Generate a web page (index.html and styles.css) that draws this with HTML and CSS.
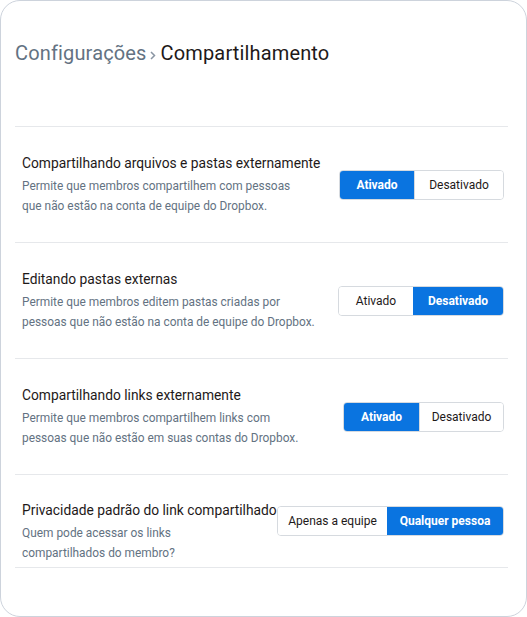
FILE: index.html
```html
<!DOCTYPE html>
<html lang="pt-BR">
<head>
<meta charset="utf-8">
<link rel="stylesheet" href="styles.css">
</head>
<body>
<div class="card">
  <header class="crumbs">
    <span class="crumb-parent">Configurações</span>
    <svg class="crumb-sep" width="6" height="9" viewBox="0 0 6 9" aria-hidden="true"><path d="M1 1 L4.5 4.5 L1 8" fill="none" stroke="#8a95a3" stroke-width="1.5"/></svg>
    <span class="crumb-current">Compartilhamento</span>
  </header>
  <section class="settings">
    <div class="row">
      <div class="info">
        <div class="title">Compartilhando arquivos e pastas externamente</div>
        <div class="desc">Permite que membros compartilhem com pessoas<br>que não estão na conta de equipe do Dropbox.</div>
      </div>
      <div class="toggle">
        <button class="seg on w74">Ativado</button>
        <button class="seg w89">Desativado</button>
      </div>
    </div>
    <div class="row">
      <div class="info">
        <div class="title">Editando pastas externas</div>
        <div class="desc">Permite que membros editem pastas criadas por<br>pessoas que não estão na conta de equipe do Dropbox.</div>
      </div>
      <div class="toggle">
        <button class="seg w74">Ativado</button>
        <button class="seg on w90">Desativado</button>
      </div>
    </div>
    <div class="row">
      <div class="info">
        <div class="title">Compartilhando links externamente</div>
        <div class="desc">Permite que membros compartilhem links com<br>pessoas que não estão em suas contas do Dropbox.</div>
      </div>
      <div class="toggle">
        <button class="seg on w75">Ativado</button>
        <button class="seg w84">Desativado</button>
      </div>
    </div>
    <div class="row row-last">
      <div class="info">
        <div class="title">Privacidade padrão do link compartilhado</div>
        <div class="desc">Quem pode acessar os links<br>compartilhados do membro?</div>
      </div>
      <div class="toggle toggle-low">
        <button class="seg w109">Apenas a equipe</button>
        <button class="seg on w116">Qualquer pessoa</button>
      </div>
    </div>
  </section>
</div>
</body>
</html>
```

FILE: styles.css
```css
* { box-sizing: border-box; }
html, body { margin: 0; padding: 0; background: #ffffff; }
body {
  font-family: Roboto, "Liberation Sans", sans-serif;
  color: #1e1919;
}
.card {
  width: 527px;
  height: 617px;
  border: 1px solid #cdd3dc;
  border-radius: 20px;
  padding: 0 18px 0 14px;
  background: #fff;
}
.crumbs {
  height: 125px;
  padding-top: 41px;
  font-size: 20px;
  line-height: 22px;
  letter-spacing: 0.15px;
  display: flex;
  align-items: flex-start;
  white-space: nowrap;
}
.crumb-parent { color: #637282; }
.crumb-sep { margin: 9px 5px 0 3px; flex-shrink: 0; }
.crumb-current { color: #1e1919; }

.settings { display: flex; flex-direction: column; }
.row {
  display: flex;
  align-items: center;
  height: 116px;
  border-top: 1px solid #e6e8eb;
  padding: 0 4px 0 7px;
}
.row-last {
  height: 94px;
  align-items: flex-start;
  padding-top: 25px;
  border-bottom: 1px solid #e6e8eb;
}
.info { white-space: nowrap; flex: 1; min-width: 0; }
.title {
  font-size: 13.8px;
  line-height: 20px;
  color: #1e1919;
}
.desc {
  margin-top: 3px;
  font-size: 11.9px;
  line-height: 20px;
  color: #637282;
}
.toggle {
  display: flex;
  height: 30px;
  border: 1px solid #d6dadf;
  border-radius: 4px;
  overflow: hidden;
  flex-shrink: 0;
  background: #fff;
  position: relative;
}
.toggle-low { margin-top: 6px; }
.seg {
  font-family: inherit;
  font-size: 12px;
  border: 0;
  margin: 0;
  padding: 0;
  background: #fff;
  color: #1e1919;
  height: 100%;
}
.seg + .seg { border-left: 1px solid #d6dadf; }
.seg.on {
  background: #0a74e0;
  color: #fff;
  font-weight: 700;
  border-left: 0;
}
.w74 { width: 74px; }
.w75 { width: 75px; }
.w84 { width: 84px; }
.w89 { width: 89px; }
.w90 { width: 90px; }
.w109 { width: 109px; }
.w116 { width: 116px; }
```
